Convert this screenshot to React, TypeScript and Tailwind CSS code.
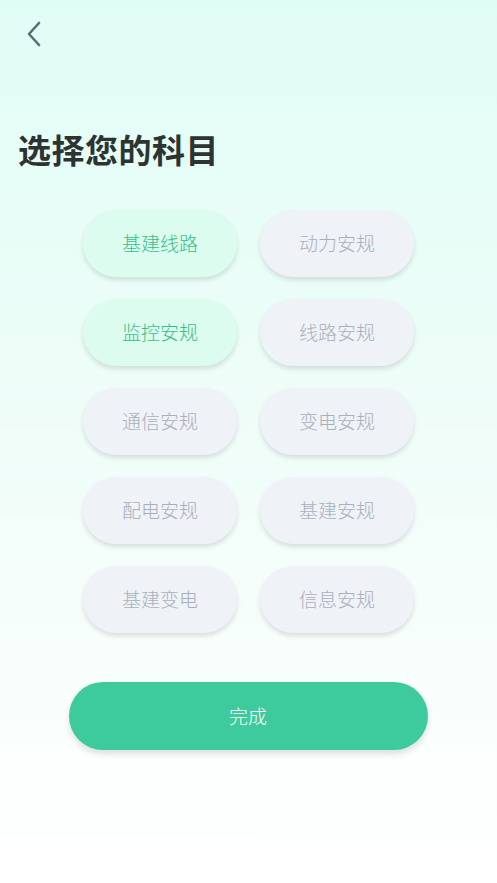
import React from "react";

const subjects = [
  { name: "基建线路", active: true },
  { name: "动力安规", active: false },
  { name: "监控安规", active: true },
  { name: "线路安规", active: false },
  { name: "通信安规", active: false },
  { name: "变电安规", active: false },
  { name: "配电安规", active: false },
  { name: "基建安规", active: false },
  { name: "基建变电", active: false },
  { name: "信息安规", active: false },
];

export default function App() {
  return (
    <div
      className="w-[497px] h-[883px] bg-gradient-to-b from-[#e0fdf5] via-[#f0fdf9] to-white"
      style={{ fontFamily: '"Noto Sans CJK SC", "Noto Sans", sans-serif' }}
    >
      <div className="h-[68px] pl-[26px] pt-[21px]">
        <svg width="16" height="26" viewBox="0 0 16 26" fill="none">
          <path d="M13 2 L3 13 L13 24" stroke="#5b6b78" strokeWidth="2.6" strokeLinecap="round" strokeLinejoin="round" />
        </svg>
      </div>

      <h1 className="mt-[59px] pl-[18px] text-[33px] leading-[44px] font-semibold text-[#2d3331] tracking-[0.5px]">
        选择您的科目
      </h1>

      <div className="mt-[39px] grid grid-cols-[154px_154px] justify-center gap-x-[23px] gap-y-[22px]">
        {subjects.map((s) => (
          <button
            key={s.name}
            className={`h-[67px] rounded-full flex items-center justify-center text-[19px] font-light shadow-[0_3px_5px_rgba(0,0,0,0.12)] ${
              s.active ? "bg-[#dbfcef] text-[#37bd89]" : "bg-[#eff2f6] text-[#a9b0bc]"
            }`}
          >
            {s.name}
          </button>
        ))}
      </div>

      <div className="mt-[49px] flex justify-center pr-[1px]">
        <button className="w-[359px] h-[68px] rounded-full bg-[#3dca9d] text-white text-[19px] font-light shadow-[0_4px_6px_rgba(0,0,0,0.12)]">
          完成
        </button>
      </div>
    </div>
  );
}
